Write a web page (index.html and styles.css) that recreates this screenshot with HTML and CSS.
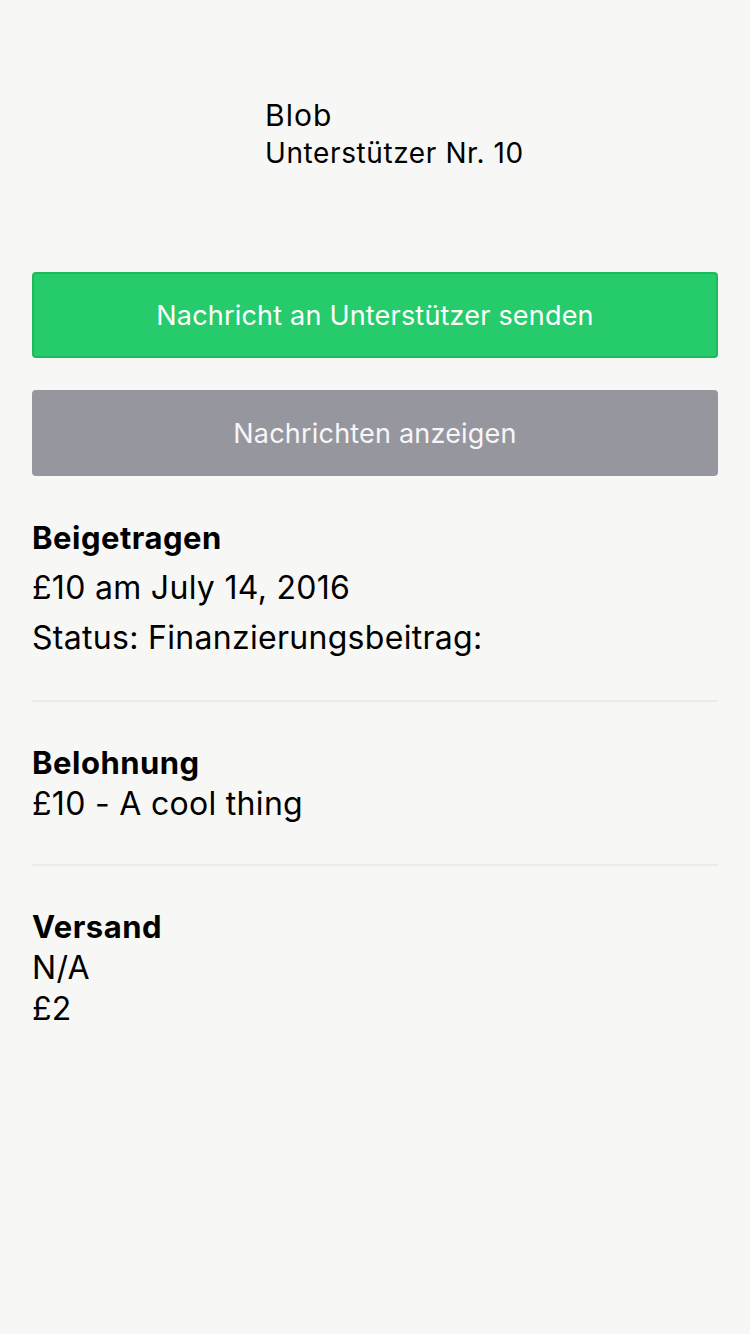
FILE: index.html
```html
<!DOCTYPE html>
<html lang="de">
<head>
<meta charset="utf-8">
<title>Unterstützer</title>
<link rel="stylesheet" href="styles.css">
</head>
<body>
<div class="page">
  <header class="backer">
    <div class="backer-name">Blob</div>
    <div class="backer-number">Unterstützer Nr. 10</div>
  </header>
  <div class="actions">
    <button class="btn btn-green">Nachricht an Unterstützer senden</button>
    <button class="btn btn-grey">Nachrichten anzeigen</button>
  </div>
  <section class="section section-pledge">
    <div class="title">Beigetragen</div>
    <div class="value">£10 am July 14, 2016</div>
    <div class="value">Status: Finanzierungsbeitrag:</div>
  </section>
  <section class="section">
    <div class="title">Belohnung</div>
    <div class="value">£10 - A cool thing</div>
  </section>
  <section class="section last">
    <div class="title">Versand</div>
    <div class="value">N/A</div>
    <div class="value">£2</div>
  </section>
</div>
</body>
</html>
```
FILE: styles.css
```css
html, body {
  margin: 0;
  padding: 0;
  background: #f7f7f5;
}
body {
  font-family: Inter, "Noto Sans", "Liberation Sans", sans-serif;
  color: #000;
  width: 750px;
  min-height: 1334px;
}
.page {
  padding: 0 32px;
}
.backer {
  padding-top: 96px;
  padding-left: 233px;
}
.backer-name {
  font-size: 30px;
  line-height: 38px;
  letter-spacing: 1px;
}
.backer-number {
  font-size: 28px;
  line-height: 38px;
  letter-spacing: 0.6px;
}
.actions {
  margin-top: 100px;
  display: flex;
  flex-direction: column;
  gap: 32px;
}
.btn {
  display: flex;
  align-items: center;
  justify-content: center;
  width: 100%;
  height: 86px;
  border-radius: 4px;
  font-family: inherit;
  font-size: 27px;
  letter-spacing: 0.2px;
  color: #fff;
  padding: 0;
  margin: 0;
}
.btn-green {
  background: #26cc6c;
  border: 2px solid #1cbb59;
}
.btn-grey {
  background: #96979e;
  border: none;
  color: #f6f6f8;
}
.section {
  padding: 40px 0;
  border-bottom: 2px solid #ebebe8;
}
.section .title {
  font-size: 31px;
  font-weight: 700;
  line-height: 41px;
  letter-spacing: 0.5px;
}
.section .value {
  font-size: 32px;
  line-height: 41px;
  letter-spacing: 0.3px;
}
.section-pledge {
  padding: 37px 0;
}
.section-pledge .title,
.section-pledge .value {
  line-height: 50px;
}
.section.last {
  border-bottom: none;
}
```
